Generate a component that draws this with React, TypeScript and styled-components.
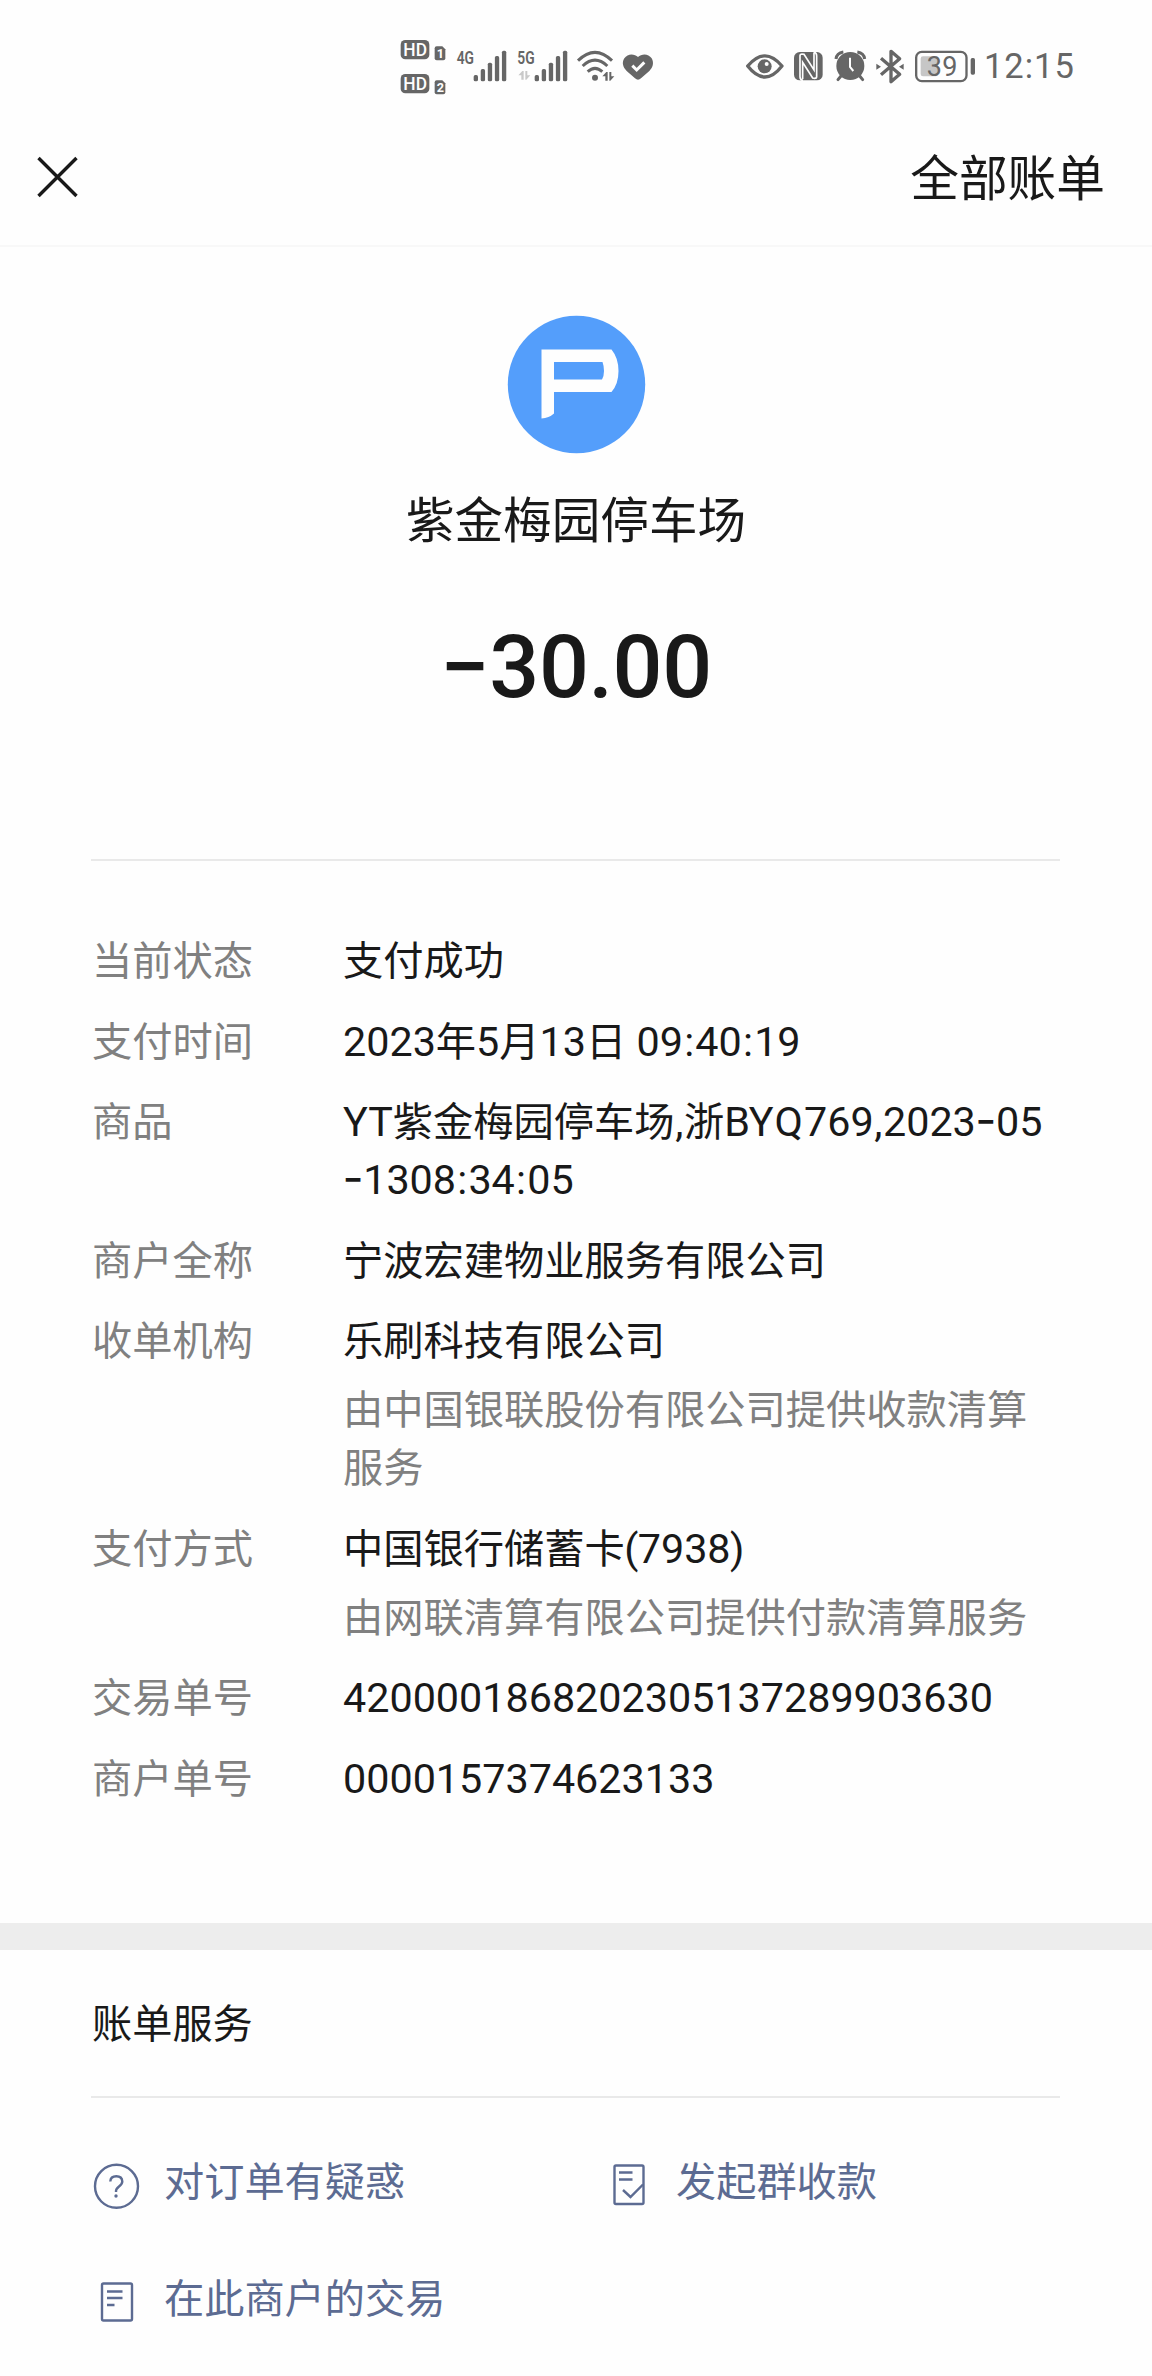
import React from "react";
import styled, { createGlobalStyle } from "styled-components";

const ink = "#191919";
const muted = "#808080";
const link = "#5c6b92";
const statusGray = "#666666";

const GlobalStyle = createGlobalStyle`
  * { box-sizing: border-box; }
  body {
    margin: 0;
    background: #fefefe;
    color: ${ink};
    font-family: "Noto Sans CJK SC", "Noto Sans", sans-serif;
  }
`;

const Page = styled.main`
  width: 1152px;
  height: 2376px;
  overflow: hidden;
  display: flex;
  flex-direction: column;
  background: #fefefe;
`;

/* ---------- status bar ---------- */

const StatusBar = styled.div`
  height: 110px;
  padding: 20px 0 0 400px;
  display: flex;
  align-items: flex-start;
`;

const StatusSvg = styled.svg<{ $gap: number }>`
  display: block;
  flex: none;
  height: 90px;
  margin-left: ${(p) => p.$gap}px;
  overflow: visible;
  fill: ${statusGray};
  font-family: Roboto, sans-serif;
`;

const Clock = styled.span`
  margin-left: 9px;
  font-family: Roboto, sans-serif;
  font-size: 34.5px;
  line-height: 93px;
  letter-spacing: 1px;
  color: ${statusGray};
`;

type GlyphProps = { from: number; to: number; gap?: number; children: React.ReactNode };

const StatusGlyph = ({ from, to, gap = 0, children }: GlyphProps) => (
  <StatusSvg $gap={gap} width={(to - from) / 3} viewBox={`${from} 0 ${to - from} 270`}>
    {children}
  </StatusSvg>
);

const HdBadge = ({ y, sim }: { y: number; sim: string }) => (
  <g>
    <rect x="62" y={y} width="86" height="58" rx="14" />
    <text x="70" y={y + 49} fontSize="56" fontWeight="500" fill="#fefefe" textLength="71" lengthAdjust="spacingAndGlyphs">
      HD
    </text>
    <path d={`M170 ${y + 19}h17l9 9v27q0 6-6 6h-20q-6 0-6-6v-30q0-6 6-6z`} />
    <text x="170" y={y + 54} fontSize="38" fontWeight="700" fill="#fefefe">
      {sim}
    </text>
  </g>
);

const Bars = ({ x }: { x: number }) => (
  <g>
    {[165, 147, 128, 108, 92].map((top, i) => (
      <rect key={top} x={x + i * 21.2} y={top} width="13" height={184 - top} rx="5" />
    ))}
  </g>
);

const Network = ({ x, label }: { x: number; label: string }) => (
  <text x={x} y="132" fontSize="55" fontWeight="600" textLength="52" lengthAdjust="spacingAndGlyphs">
    {label}
  </text>
);

const UpDown = ({ x, y }: { x: number; y: number }) => (
  <path d={`M${x} ${y + 13}l12-13h4v26h-7v-13zM${x + 21} ${y}h6v13h9l-12 13h-3z`} />
);

/* ---------- header ---------- */

const Header = styled.header`
  height: 137px;
  padding: 0 47px 2px 36px;
  display: flex;
  align-items: center;
  justify-content: space-between;
  border-bottom: 2px solid #f8f8f8;
`;

const CloseButton = styled.button`
  width: 44px;
  height: 44px;
  padding: 0;
  border: 0;
  background: none;
  svg { display: block; }
`;

const AllBills = styled.span`
  padding-bottom: 4px;
  font-size: 48.7px;
  line-height: 70px;
`;

/* ---------- summary ---------- */

const Summary = styled.section`
  height: 612px;
  margin: 0 92px;
  padding-top: 68px;
  display: flex;
  flex-direction: column;
  align-items: center;
`;

const Logo = styled.svg`
  width: 139px;
  height: 139px;
`;

const Merchant = styled.h1`
  margin: 28px 0 0;
  font-size: 48.6px;
  font-weight: 400;
  line-height: 70px;
`;

const Amount = styled.div`
  margin-top: 65px;
  font-family: Roboto, sans-serif;
  font-size: 88px;
  font-weight: 500;
  line-height: 100px;
  letter-spacing: -0.4px;
`;

const Divider = styled.hr`
  width: 969px;
  height: 2px;
  margin: 0 0 0 91px;
  border: 0;
  flex: none;
  background: #e9e9e9;
`;

/* ---------- details ---------- */

const Details = styled.dl`
  height: 1062px;
  margin: 0;
  padding: 68px 92px 0;
  display: flex;
  flex-direction: column;
  gap: 22.55px;
  font-size: 40.26px;
  line-height: 58px;
`;

const Row = styled.div`
  display: grid;
  grid-template-columns: 251px 1fr;
`;

const Label = styled.dt`
  color: ${muted};
`;

const Value = styled.dd`
  margin: 0;
  white-space: nowrap;
`;

const Line = styled.div`
  height: 58px;
`;

const Note = styled.div`
  margin-top: 11px;
  color: ${muted};
`;

const Latin = styled.span<{ $spread?: number }>`
  margin: 0 ${(p) => p.$spread ?? 0}px;
  font-family: Roboto, sans-serif;
  font-size: 41.3px;
  line-height: 0;
`;

const Hyphen = styled.span`
  margin: 0 -0.5px;
  font-family: Inter, sans-serif;
  font-size: 46px;
  line-height: 0;
`;

const spreads: Record<string, number> = { ":": 1.2, ",": 0.6, "(": -0.6, ")": -0.6, Q: 1 };

const Mixed = ({ text }: { text: string }) => (
  <>
    {text.split(/([-:,()Q]|[ A-PR-Z0-9]+)/).map((part, i) => {
      if (part === "-") return <Hyphen key={i}>-</Hyphen>;
      if (/^[ -~]+$/.test(part)) {
        return (
          <Latin key={i} $spread={spreads[part]}>
            {part}
          </Latin>
        );
      }
      return part;
    })}
  </>
);

type Detail = { label: string; lines: string[]; notes?: string[] };

const details: Detail[] = [
  { label: "当前状态", lines: ["支付成功"] },
  { label: "支付时间", lines: ["2023年5月13日 09:40:19"] },
  { label: "商品", lines: ["YT紫金梅园停车场,浙BYQ769,2023-05", "-1308:34:05"] },
  { label: "商户全称", lines: ["宁波宏建物业服务有限公司"] },
  { label: "收单机构", lines: ["乐刷科技有限公司"], notes: ["由中国银联股份有限公司提供收款清算", "服务"] },
  { label: "支付方式", lines: ["中国银行储蓄卡(7938)"], notes: ["由网联清算有限公司提供付款清算服务"] },
  { label: "交易单号", lines: ["4200001868202305137289903630"] },
  { label: "商户单号", lines: ["0000157374623133"] },
];

/* ---------- services ---------- */

const Band = styled.div`
  height: 27px;
  flex: none;
  background: #ededed;
`;

const ServicesTitle = styled.h2`
  height: 146px;
  margin: 0;
  padding: 42px 92px 0;
  font-size: 40.2px;
  font-weight: 400;
  line-height: 58px;
`;

const Services = styled.nav`
  padding: 52px 92px 0;
  display: grid;
  grid-template-columns: 512px 1fr;
  row-gap: 57px;
`;

const Service = styled.a`
  display: flex;
  color: ${link};
  font-size: 40.2px;
  line-height: 58px;
`;

const ServiceIcon = styled.svg`
  width: 48px;
  height: 48px;
  margin: 12px 24px 0 0;
  flex: none;
  fill: none;
  stroke: ${link};
  stroke-width: 2.4;
`;

export default function App() {
  return (
    <>
      <GlobalStyle />
      <Page>
        <StatusBar>
          <StatusGlyph from={60} to={198}>
            <HdBadge y={60} sim="1" />
            <HdBadge y={162} sim="2" />
          </StatusGlyph>
          <StatusGlyph from={228} to={381} gap={10}>
            <Network x={230} label="4G" />
            <Bars x={281} />
          </StatusGlyph>
          <StatusGlyph from={411} to={564} gap={10}>
            <Network x={412} label="5G" />
            <g opacity="0.35">
              <UpDown x={415} y={153} />
            </g>
            <Bars x={464} />
          </StatusGlyph>
          <StatusGlyph from={591} to={702} gap={9}>
            <g fill="none" stroke={statusGray} strokeWidth="9" strokeLinecap="butt">
              <path d="M594 122Q645 72 696 122" />
              <path d="M608 138Q645 103 682 138" />
              <path d="M623 155Q645 135 667 155" />
            </g>
            <circle cx="645" cy="173" r="9" />
            <UpDown x={667} y={156} />
          </StatusGlyph>
          <StatusGlyph from={729} to={819} gap={9}>
            <path d="M774 111c10-10 31-12 41 4 8 15 3 28-7 38l-25 22q-9 8-18 0l-25-22c-10-10-16-24-7-38 10-16 31-14 41-4z" />
            <path d="M757 137l13 13 23-23" fill="none" stroke="#fefefe" strokeWidth="9" />
          </StatusGlyph>

          <StatusGlyph from={77} to={190} gap={92.67}>
            <path d="M82 138q52-61 103 0q-51 66-103 0z" fill="none" stroke={statusGray} strokeWidth="10" strokeLinejoin="round" />
            <circle cx="133" cy="139" r="21" />
            <circle cx="139" cy="132" r="6" fill="#fefefe" />
          </StatusGlyph>
          <StatusGlyph from={222} to={308} gap={10.67}>
            <rect x="222" y="96" width="86" height="85" rx="17" />
            <path
              d="M249 181Q240 179 240 170V107q0-5 6-5l6 1 30 47V98M281 96Q290 98 290 107V170q0 5-6 5l-6-1-30-47v50"
              fill="none"
              stroke="#fefefe"
              strokeWidth="5"
            />
          </StatusGlyph>
          <StatusGlyph from={345} to={436} gap={12.33}>
            <circle cx="391" cy="138" r="42" />
            <path
              d="M348 117q2-18 22-21M434 117q-2-18-22-21"
              fill="none"
              stroke={statusGray}
              strokeWidth="9"
            />
            <path d="M363 168l-9 11M419 168l9 11" fill="none" stroke={statusGray} strokeWidth="9" strokeLinecap="round" />
            <path d="M390 113v28l10 12" fill="none" stroke="#fefefe" strokeWidth="6" />
          </StatusGlyph>
          <StatusGlyph from={468} to={552} gap={10.67}>
            <path
              d="M483 115l56 48-26 22V94l26 22-56 48"
              fill="none"
              stroke={statusGray}
              strokeWidth="10"
              strokeLinejoin="round"
            />
            <path d="M469 131l14 9-14 9zM551 131l-14 9 14 9z" />
          </StatusGlyph>
          <StatusGlyph from={585} to={765} gap={11}>
            <rect x="588.5" y="95.5" width="151" height="88" rx="17" fill="none" stroke={statusGray} strokeWidth="7" />
            <rect x="602" y="109" width="52" height="60" rx="7" fill="#c6c6c6" />
            <text x="620" y="167" fontSize="81" textLength="92">
              39
            </text>
            <rect x="752" y="114" width="13" height="50" rx="5" />
          </StatusGlyph>
          <Clock>12:15</Clock>
        </StatusBar>

        <Header>
          <CloseButton aria-label="关闭">
            <svg width="44" height="44" viewBox="0 0 44 44" stroke={ink} strokeWidth="3.4">
              <path d="M2.5 3L40.5 41M40.5 3L2.5 41" />
            </svg>
          </CloseButton>
          <AllBills>全部账单</AllBills>
        </Header>

        <Summary>
          <Logo viewBox="0 0 139 139">
            <circle cx="69.5" cy="69.5" r="68.7" fill="#549efb" />
            <path
              fillRule="evenodd"
              fill="#fefefe"
              d="M34.5 34.5H104.5Q111.500 43 111.500 56T104.500 77H47V98.500Q42 103 34.500 103.500ZM47 47V64.500H95Q97 61 97 56T95.500 47Z"
            />
          </Logo>
          <Merchant>紫金梅园停车场</Merchant>
          <Amount>−30.00</Amount>
        </Summary>

        <Divider />

        <Details>
          {details.map((d) => (
            <Row key={d.label}>
              <Label>{d.label}</Label>
              <Value>
                {d.lines.map((t) => (
                  <Line key={t}>
                    <Mixed text={t} />
                  </Line>
                ))}
                {d.notes && (
                  <Note>
                    {d.notes.map((t) => (
                      <Line key={t}>{t}</Line>
                    ))}
                  </Note>
                )}
              </Value>
            </Row>
          ))}
        </Details>

        <Band />
        <ServicesTitle>账单服务</ServicesTitle>
        <Divider />

        <Services>
          <Service>
            <ServiceIcon viewBox="0 0 48 48">
              <circle cx="24.5" cy="24.3" r="21.5" />
              <path d="M18.3 19.5Q18.6 14.3 24.3 14.3T30.3 19.5Q30.3 22 27 24.5T24 30" />
              <circle cx="24" cy="34" r="1.7" fill={link} stroke="none" />
            </ServiceIcon>
            对订单有疑惑
          </Service>
          <Service>
            <ServiceIcon viewBox="0 0 48 48">
              <rect x="10.5" y="3.5" width="29" height="38.5" rx="1.5" />
              <path d="M15 10.500H28.500M15 17.500H28.500M19 28L26.500 35L39 22.500" />
            </ServiceIcon>
            发起群收款
          </Service>
          <Service>
            <ServiceIcon viewBox="0 0 48 48">
              <rect x="10" y="4.5" width="30" height="37" rx="1.5" />
              <path d="M15 12.500H30.500M15 19H30.500M15 26H22.500" />
            </ServiceIcon>
            在此商户的交易
          </Service>
        </Services>
      </Page>
    </>
  );
}
